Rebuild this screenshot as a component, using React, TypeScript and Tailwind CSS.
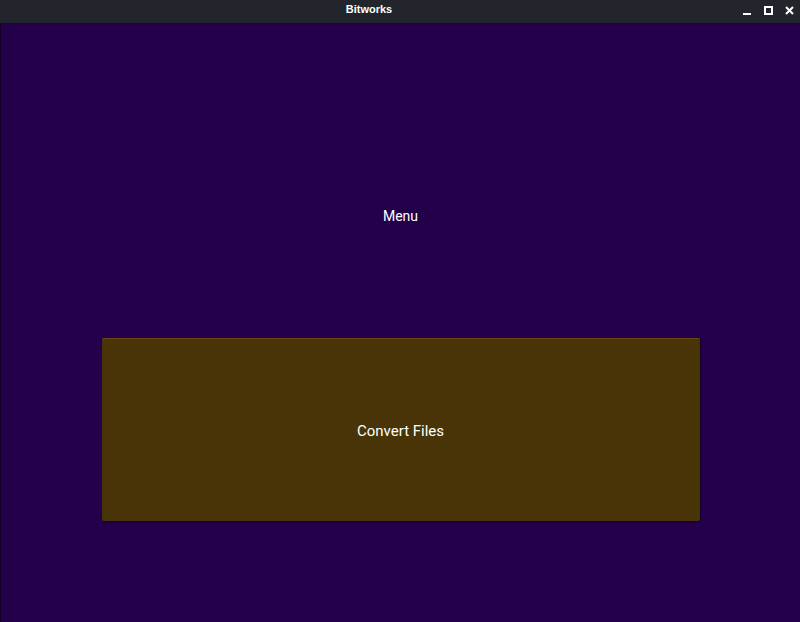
import React from 'react';

const TitleBar: React.FC = () => (
    <div className="relative flex h-[23px] items-center justify-center bg-[#22252c] pb-[4px] pr-[62px] text-white">
        <span className="text-[11px] font-bold" style={{ fontFamily: '"Liberation Sans", sans-serif' }}>Bitworks</span>
        {/* window controls */}
        <div className="absolute right-[6px] top-0 flex h-full items-center gap-[12px] pb-[3px]">
            <svg width="9" height="9" viewBox="0 0 9 9"><rect x="0" y="7" width="8" height="2" fill="#fff" /></svg>
            <svg width="9" height="9" viewBox="0 0 9 9"><rect x="1" y="1" width="7" height="7" fill="none" stroke="#fff" strokeWidth="2" /></svg>
            <svg width="9" height="9" viewBox="0 0 9 9"><path d="M1 1L8 8M8 1L1 8" stroke="#fff" strokeWidth="2" /></svg>
        </div>
    </div>
);

export default function App() {
    return (
        <div className="flex h-[622px] w-[800px] flex-col overflow-hidden" style={{ fontFamily: 'Roboto, sans-serif' }}>
            <TitleBar />
            <div className="flex flex-1 flex-col items-center border-l border-[#14002a] bg-[#25004a]">
                <div className="mt-[183px] h-[20px] text-[14px] leading-[20px] text-white">Menu</div>
                <button className="mt-[112px] flex h-[183px] w-[598px] items-center justify-center rounded-[2px] border-t border-[#6a4a10] bg-[#483407] pt-[2px] text-[15px] text-white shadow-[1px_1px_1px_rgba(0,0,0,0.4)]">
                    Convert Files
                </button>
            </div>
        </div>
    );
}
